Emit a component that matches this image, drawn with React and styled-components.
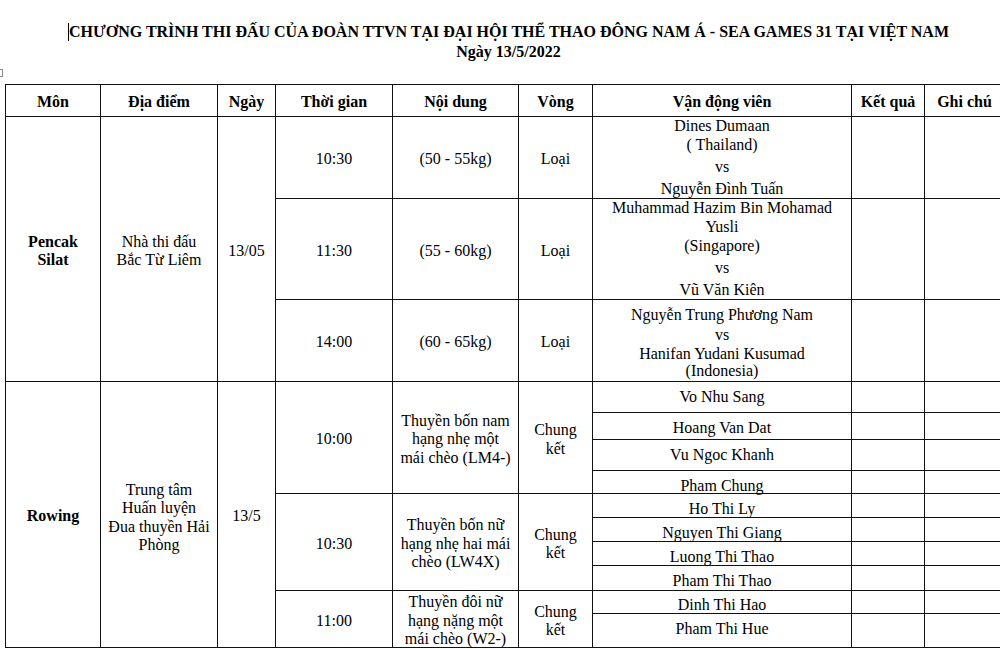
import React from 'react';
import styled, { createGlobalStyle } from 'styled-components';

const GlobalStyle = createGlobalStyle`
  html, body {
    margin: 0;
    padding: 0;
    background: #ffffff;
    overflow: hidden;
  }
  body {
    font-family: "Liberation Serif", "Times New Roman", "DejaVu Serif", serif;
    color: #000;
  }
`;

const Page = styled.div`
  width: 1000px;
  height: 649px;
  overflow: hidden;
`;

const Heading = styled.header`
  padding: 22px 0 0 17px;
  text-align: center;
  font-weight: 700;
  font-size: 16px;
  line-height: 20px;
`;

const Title = styled.h1`
  margin: 0;
  font: inherit;
  white-space: nowrap;
`;

const Caret = styled.span`
  display: inline-block;
  width: 1px;
  height: 18px;
  background: #000;
  vertical-align: -4px;
`;

const Subtitle = styled.h2`
  margin: 0;
  font: inherit;
`;

const TableWrap = styled.div`
  position: relative;
  margin: 22px 0 0 5px;
`;

const MoveHandle = styled.span`
  position: absolute;
  left: -10px;
  top: -15px;
  width: 8px;
  height: 8px;
  box-sizing: border-box;
  border: 1px solid #8a8a8a;
  background: #fff;
`;

const Grid = styled.div`
  display: grid;
  grid-template-columns: 95px 117px 58px 117px 126px 74px 259px 73px 80px;
  grid-template-rows: 32px 82px 101px 82px 31px 27px 31px 23px 24px 24px 24px 25px 23px 34px;
  width: max-content;
  border-top: 1px solid #111;
  border-left: 1px solid #111;
`;

const pad = (s) => 4 + 2 * s;

const Cell = styled.div`
  grid-row: span ${(p) => p.$rows || 1};
  box-sizing: border-box;
  border-right: 1px solid #111;
  border-bottom: 1px solid #111;
  display: flex;
  flex-direction: column;
  align-items: center;
  justify-content: ${(p) => (p.$top ? 'flex-start' : 'center')};
  padding: ${(p) =>
    p.$top
      ? '0 2px'
      : `${Math.max(0, pad(p.$shift || 0))}px 2px ${Math.max(0, -pad(p.$shift || 0))}px`};
  text-align: center;
  font-size: 16px;
  line-height: 18.5px;
  font-weight: ${(p) => (p.$bold ? 700 : 400)};
  white-space: nowrap;
  min-width: 0;
  min-height: 0;
`;

const Line = styled.span`
  display: block;
  line-height: 19px;
  margin-top: ${(p) => p.$mt || 0}px;
`;

const headers = ['Môn', 'Địa điểm', 'Ngày', 'Thời gian', 'Nội dung', 'Vòng', 'Vận động viên', 'Kết quả', 'Ghi chú'];

const Lines = ({ items }) =>
  items.map(([text, mt], i) => (
    <Line key={i} $mt={mt}>
      {text}
    </Line>
  ));

const Multi = ({ text }) =>
  text.split('\n').map((t, i) => <span key={i}>{t}</span>);

const pencak = [
  {
    time: '10:30',
    weight: '(50 - 55kg)',
    athletes: [['Dines Dumaan', -1], ['( Thailand)'], ['vs', 3], ['Nguyễn Đình Tuấn', 3]],
  },
  {
    time: '11:30',
    weight: '(55 - 60kg)',
    athletes: [['Muhammad Hazim Bin Mohamad', -1], ['Yusli'], ['(Singapore)'], ['vs', 3], ['Vũ Văn Kiên', 3]],
  },
  {
    time: '14:00',
    weight: '(60 - 65kg)',
    athletes: [['Nguyễn Trung Phương Nam', 5], ['vs', 1], ['Hanifan Yudani Kusumad'], ['(Indonesia)', -2]],
  },
];

const rowing = [
  {
    time: '10:00',
    event: 'Thuyền bốn nam\nhạng nhẹ một\nmái chèo (LM4-)',
    athletes: [['Vo Nhu Sang', -2], ['Hoang Van Dat', 0], ['Vu Ngoc Khanh', -2], ['Pham Chung', 2]],
  },
  {
    time: '10:30',
    event: 'Thuyền bốn nữ\nhạng nhẹ hai mái\nchèo (LW4X)',
    athletes: [['Ho Thi Ly', 2], ['Nguyen Thi Giang', 2], ['Luong Thi Thao', 2], ['Pham Thi Thao', 1]],
  },
  {
    time: '11:00',
    event: 'Thuyền đôi nữ\nhạng nặng một\nmái chèo (W2-)',
    athletes: [['Dinh Thi Hao', 1], ['Pham Thi Hue', -3]],
  },
];

export default function App() {
  return (
    <Page>
      <GlobalStyle />
      <Heading>
        <Title>
          <Caret />
          CHƯƠNG TRÌNH THI ĐẤU CỦA ĐOÀN TTVN TẠI ĐẠI HỘI THỂ THAO ĐÔNG NAM Á - SEA GAMES 31 TẠI VIỆT NAM
        </Title>
        <Subtitle>Ngày 13/5/2022</Subtitle>
      </Heading>
      <TableWrap>
        <MoveHandle />
        <Grid>
          {headers.map((h) => (
            <Cell key={h} $bold>
              {h}
            </Cell>
          ))}

          <Cell $rows={3} $bold>
            <Multi text={'Pencak\nSilat'} />
          </Cell>
          <Cell $rows={3}>
            <Multi text={'Nhà thi đấu\nBắc Từ Liêm'} />
          </Cell>
          <Cell $rows={3}>13/05</Cell>
          {pencak.map((m) => (
            <React.Fragment key={m.time}>
              <Cell>{m.time}</Cell>
              <Cell>{m.weight}</Cell>
              <Cell>Loại</Cell>
              <Cell $top>
                <Lines items={m.athletes} />
              </Cell>
              <Cell />
              <Cell />
            </React.Fragment>
          ))}

          <Cell $rows={10} $bold>
            Rowing
          </Cell>
          <Cell $rows={10} $shift={1}>
            <Multi text={'Trung tâm\nHuấn luyện\nĐua thuyền Hải\nPhòng'} />
          </Cell>
          <Cell $rows={10}>13/5</Cell>
          {rowing.map((g) =>
            g.athletes.map(([name, shift], i) => (
              <React.Fragment key={name}>
                {i === 0 && (
                  <>
                    <Cell $rows={g.athletes.length}>{g.time}</Cell>
                    <Cell $rows={g.athletes.length}>
                      <Multi text={g.event} />
                    </Cell>
                    <Cell $rows={g.athletes.length}>
                      <Multi text={'Chung\nkết'} />
                    </Cell>
                  </>
                )}
                <Cell $shift={shift}>{name}</Cell>
                <Cell />
                <Cell />
              </React.Fragment>
            ))
          )}
        </Grid>
      </TableWrap>
    </Page>
  );
}
